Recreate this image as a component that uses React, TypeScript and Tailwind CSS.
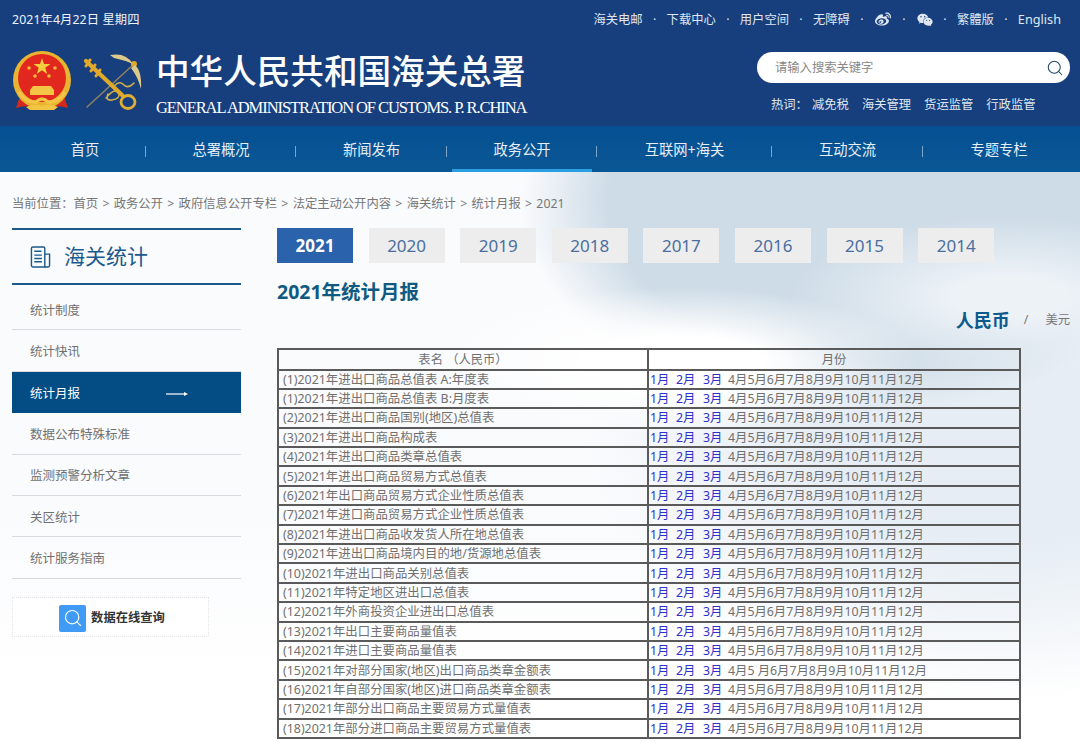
import { FaWeibo, FaWeixin } from "react-icons/fa";
import { Search } from "lucide-react";

const TOP_LINKS = ["海关电邮", "下载中心", "用户空间", "无障碍"];
const HOT_WORDS = ["减免税", "海关管理", "货运监管", "行政监管"];
const NAV = [
  { label: "首页", width: "w-[146px] pl-[24px]" },
  { label: "总署概况", width: "w-[150px]" },
  { label: "新闻发布", width: "w-[151px]" },
  { label: "政务公开", width: "w-[150px]", active: true },
  { label: "互联网+海关", width: "w-[175px]" },
  { label: "互动交流", width: "w-[151px]" },
  { label: "专题专栏", width: "w-[152px]" },
];
const CRUMBS = ["首页", "政务公开", "政府信息公开专栏", "法定主动公开内容", "海关统计", "统计月报", "2021"];
const SIDE = ["统计制度", "统计快讯", "统计月报", "数据公布特殊标准", "监测预警分析文章", "关区统计", "统计服务指南"];
const YEARS = ["2021", "2020", "2019", "2018", "2017", "2016", "2015", "2014"];
const ROWS = [
  "(1)2021年进出口商品总值表 A:年度表",
  "(1)2021年进出口商品总值表 B:月度表",
  "(2)2021年进出口商品国别(地区)总值表",
  "(3)2021年进出口商品构成表",
  "(4)2021年进出口商品类章总值表",
  "(5)2021年进出口商品贸易方式总值表",
  "(6)2021年出口商品贸易方式企业性质总值表",
  "(7)2021年进口商品贸易方式企业性质总值表",
  "(8)2021年进出口商品收发货人所在地总值表",
  "(9)2021年进出口商品境内目的地/货源地总值表",
  "(10)2021年进出口商品关别总值表",
  "(11)2021年特定地区进出口总值表",
  "(12)2021年外商投资企业进出口总值表",
  "(13)2021年出口主要商品量值表",
  "(14)2021年进口主要商品量值表",
  "(15)2021年对部分国家(地区)出口商品类章金额表",
  "(16)2021年自部分国家(地区)进口商品类章金额表",
  "(17)2021年部分出口商品主要贸易方式量值表",
  "(18)2021年部分进口商品主要贸易方式量值表",
];

function Emblem() {
  return (
    <svg viewBox="0 0 60 62" className="h-[62px] w-[60px]">
      <path d="M8 46 L4 58 Q16 54 22 59 Q30 54 38 59 Q44 54 56 58 L52 46 Z" fill="#d3271f" />
      <circle cx="30" cy="30" r="29" fill="#e9b531" />
      <circle cx="30" cy="28" r="24" fill="#e2271e" />
      <polygon points="30,8 32,14 38.5,14 33.3,17.8 35.2,24 30,20.3 24.8,24 26.7,17.8 21.5,14 28,14" fill="#f6cf3f" />
      <circle cx="17" cy="18" r="1.8" fill="#f0b93a" />
      <circle cx="43" cy="18" r="1.8" fill="#f0b93a" />
      <circle cx="23" cy="26" r="1.8" fill="#f0b93a" />
      <circle cx="37" cy="26" r="1.8" fill="#f0b93a" />
      <path d="M21 36 h18 l3 4 h-24 Z M18 40 h24 v5 H18 Z" fill="#f3c544" />
      <path d="M7 42 Q14 53 24 52 Q30 46 36 52 Q46 53 53 42" fill="none" stroke="#f3c544" strokeWidth="3.5" />
      <path d="M14 57 Q22 53 30 56 Q38 53 46 57 L42 60 H18 Z" fill="#f3c544" />
    </svg>
  );
}

function KeyMark() {
  return (
    <svg viewBox="0 0 60 60" className="h-[60px] w-[60px]">
      <g fill="none" strokeLinecap="round">
        <path d="M3 54 L50 11" stroke="#8d8261" strokeWidth="1.5" />
        <path d="M22 45 Q31 34 35 40 Q36 46 28 47 Q21 48 24 41 M30 33 Q36 27 40 32 Q44 36 50 30" stroke="#d2ae4b" strokeWidth="1.6" />
        <path d="M2 8 L38 42" stroke="#e0a92a" strokeWidth="4.2" />
        <path d="M6 7 L2 13 M11 12 L7 18 M16 17 L12 23" stroke="#e0a92a" strokeWidth="3" />
        <ellipse cx="44" cy="49" rx="7" ry="6.5" stroke="#e0ae33" strokeWidth="2.8" />
      </g>
      <circle cx="50" cy="11" r="3" fill="#e0a92a" />
      <path d="M26 2 Q42 -1 49 11 Q40 7 30 5 Z" fill="#dcc888" />
      <path d="M51 12 Q58 18 57 36 Q54 24 47 15 Z" fill="#dcc888" />
    </svg>
  );
}

function DocIcon() {
  return (
    <svg viewBox="0 0 22 24" className="h-[24px] w-[21px]" fill="none" stroke="#1b5a8c" strokeWidth="1.5">
      <path d="M1.5 3 Q1.5 1.5 3 1.5 H14 Q15.5 1.5 15.5 3 V22.5 H3 Q1.5 22.5 1.5 21 Z" />
      <path d="M15.5 9 H20.5 V21 Q20.5 22.5 19 22.5 H15.5" />
      <path d="M4.5 6 H12 M4.5 10 H12.5 M4.5 13.5 H12.5 M4.5 17 H12.5" />
    </svg>
  );
}

function Months({ odd }: { odd?: boolean }) {
  const rest = odd
    ? ["6月", "7月", "8月", "9月", "10月", "11月", "12月"]
    : ["5月", "6月", "7月", "8月", "9月", "10月", "11月", "12月"];
  return (
    <div className="flex pl-[1px] text-[12.35px]">
      <a className="w-[26px] text-[#3030cc]">1月</a>
      <a className="w-[27px] text-[#3030cc]">2月</a>
      <a className="w-[25px] text-[#3030cc]">3月</a>
      <span>4月</span>
      {odd && <span>5 月</span>}
      {rest.map((m) => (
        <span key={m}>{m}</span>
      ))}
    </div>
  );
}

export default function App() {
  return (
    <div className="relative h-[741px] w-[1080px] overflow-hidden bg-white font-['Noto_Sans','Noto_Sans_CJK_SC',sans-serif] text-[12.3px] text-[#707070]">
      <header className="h-[126px] bg-[#183f7d] text-white">
        <div className="flex h-[40px] items-center justify-between pl-[12px] pr-[19px] text-[#eef2f8]">
          <span className="tracking-[0.1px]">2021年4月22日 星期四</span>
          <div className="flex items-center text-[#dfe7f2]">
            {TOP_LINKS.map((t) => (
              <span key={t} className="flex items-center">
                {t}
                <span className="mx-[9px] w-[6px] text-center">·</span>
              </span>
            ))}
            <span className="ml-[1px] flex w-[16px] items-center text-[17px]">
              <FaWeibo />
            </span>
            <span className="mx-[10px] w-[6px] text-center">·</span>
            <span className="flex w-[16px] items-center text-[16px]">
              <FaWeixin />
            </span>
            <span className="mx-[9px] w-[6px] text-center">·</span>
            <span>繁體版</span>
            <span className="mx-[9px] w-[6px] text-center">·</span>
            <span className="text-[12.7px]">English</span>
          </div>
        </div>
        <div className="flex items-start justify-between pl-[12px] pr-[10px]">
          <div className="flex items-start">
            <div className="mt-[10px]">
              <Emblem />
            </div>
            <div className="ml-[12px] mt-[13px]">
              <KeyMark />
            </div>
            <div className="ml-[12px] mt-[9px] text-white">
              <div className="font-['Liberation_Serif','Noto_Sans_CJK_SC',serif] text-[33.6px] leading-[48px] font-medium whitespace-nowrap">
                中华人民共和国海关总署
              </div>
              <div className="mt-[1px] font-['Liberation_Serif',serif] text-[16.5px] leading-[20px] tracking-[-1.08px] whitespace-nowrap">
                GENERAL ADMINISTRATION OF CUSTOMS. P. R.CHINA
              </div>
            </div>
          </div>
          <div className="w-[313px] pt-[12px]">
            <div className="flex h-[31px] items-center justify-between rounded-full bg-white pl-[18px] pr-[6px] text-[#888]">
              <span className="pt-[1px]">请输入搜索关键字</span>
              <Search size={18} strokeWidth={1.4} className="text-[#234a6a]" />
            </div>
            <div className="mt-[13px] flex pl-[14px] leading-[18px] text-[#dfe7f2]">
              <span className="w-[41px]">热词：</span>
              {HOT_WORDS.map((w) => (
                <span key={w} className="mr-[13px]">
                  {w}
                </span>
              ))}
            </div>
          </div>
        </div>
      </header>

      <nav className="flex h-[46px] bg-gradient-to-b from-[#054f92] to-[#0a5795] text-[14.3px] text-[#e6eef6]">
        {NAV.map((n, i) => (
          <div key={n.label} className={`relative flex items-center justify-center pt-[1px] ${n.width}`}>
            <span>{n.label}</span>
            {i < NAV.length - 1 && <span className="absolute right-0 top-[20px] h-[11px] w-px bg-[#7fa5c9]" />}
            {n.active && <span className="absolute bottom-0 left-[5px] right-[5px] h-[3px] bg-[#2b9fe2]" />}
          </div>
        ))}
      </nav>

      <main className="h-[569px] bg-[radial-gradient(ellipse_240px_75px_at_680px_190px,#ffffff_35%,#ffffff00),radial-gradient(ellipse_220px_80px_at_1010px_125px,#edf2f7_25%,#edf2f700),radial-gradient(ellipse_340px_210px_at_860px_30px,#cedce7_74%,#cedce700),radial-gradient(ellipse_420px_290px_at_1000px_240px,#e6edf4_45%,#e6edf400),linear-gradient(to_bottom,#fafbfd_60%,#ffffff_90%)] pl-[12px] pt-[23px]">
        <div className="flex h-[18px] items-center text-[#777]">
          <span>当前位置：</span>
          {CRUMBS.map((c, i) => (
            <span key={c} className="whitespace-pre">
              {c}
              {i < CRUMBS.length - 1 && <span className="mx-[4.3px]">&gt;</span>}
            </span>
          ))}
        </div>

        <div className="mt-[15px] flex">
          <aside className="w-[229px]">
            <div className="flex h-[57px] items-center border-y-2 border-[#1b5a8c] pl-[18px] text-[#1b5a8c]">
              <DocIcon />
              <span className="ml-[13px] text-[21px]">海关统计</span>
            </div>
            <div className="mt-[4px]">
              {SIDE.map((s) => {
                const active = s === "统计月报";
                return (
                  <div
                    key={s}
                    className={`flex h-[41.4px] items-center justify-between pl-[18px] pr-[53px] pt-[4px] text-[12.5px] ${
                      active ? "bg-[#034c84] text-white" : "border-b border-[#d9dae0]"
                    }`}
                  >
                    <span>{s}</span>
                    {active && (
                      <svg viewBox="0 0 22 6" className="h-[6px] w-[22px]">
                        <path d="M0 3 H19" stroke="#fff" strokeWidth="1.2" />
                        <path d="M18 1 L22 3 L18 5 Z" fill="#fff" />
                      </svg>
                    )}
                  </div>
                );
              })}
            </div>
            <div className="mt-[18px] flex h-[40px] w-[197px] items-center justify-center border border-dotted border-[#e4e4e8] bg-white pl-[3px] pt-[3px]">
              <span className="flex h-[27px] w-[27px] items-center justify-center rounded-[2px] bg-[#3f9bf6]">
                <Search size={20} strokeWidth={1.4} className="text-white" />
              </span>
              <span className="ml-[5px] text-[12.3px] font-bold text-[#333]">数据在线查询</span>
            </div>
          </aside>

          <section className="ml-[36px]">
            <div className="flex gap-[15.6px]">
              {YEARS.map((y, i) => (
                <div
                  key={y}
                  className={`flex h-[35px] w-[76px] items-center justify-center text-[17px] ${
                    i === 0 ? "bg-[#2a62ab] font-bold text-white" : "bg-[#ededee] text-[#4a6f9f]"
                  }`}
                >
                  {y}
                </div>
              ))}
            </div>
            <h2 className="mt-[14px] text-[19.5px] leading-[29px] font-bold text-[#0f5a80]">2021年统计月报</h2>
            <div className="flex h-[28px] w-[793px] items-center justify-end">
              <span className="text-[18px] font-bold text-[#0d5a8c]">人民币</span>
              <span className="ml-[14px] text-[#777]">/</span>
              <span className="ml-[17px] text-[#777]">美元</span>
            </div>
            <table className="mt-[14px] w-[744px] table-fixed border-collapse border-2 border-[#5a5a5a] leading-[17px]">
              <thead>
                <tr className="h-[20.5px]">
                  <th className="w-[370px] border-2 border-[#5a5a5a] p-0 font-normal">表名 （人民币）</th>
                  <th className="border-2 border-[#5a5a5a] p-0 font-normal">月份</th>
                </tr>
              </thead>
              <tbody>
                {ROWS.map((r, i) => (
                  <tr key={r} className="h-[19.4px]">
                    <td className="border-2 border-[#5a5a5a] p-0 pl-[4px] text-[12.4px] whitespace-nowrap">{r}</td>
                    <td className="border-2 border-[#5a5a5a] p-0 whitespace-nowrap">
                      <Months odd={i === 15} />
                    </td>
                  </tr>
                ))}
              </tbody>
            </table>
          </section>
        </div>
      </main>
    </div>
  );
}
